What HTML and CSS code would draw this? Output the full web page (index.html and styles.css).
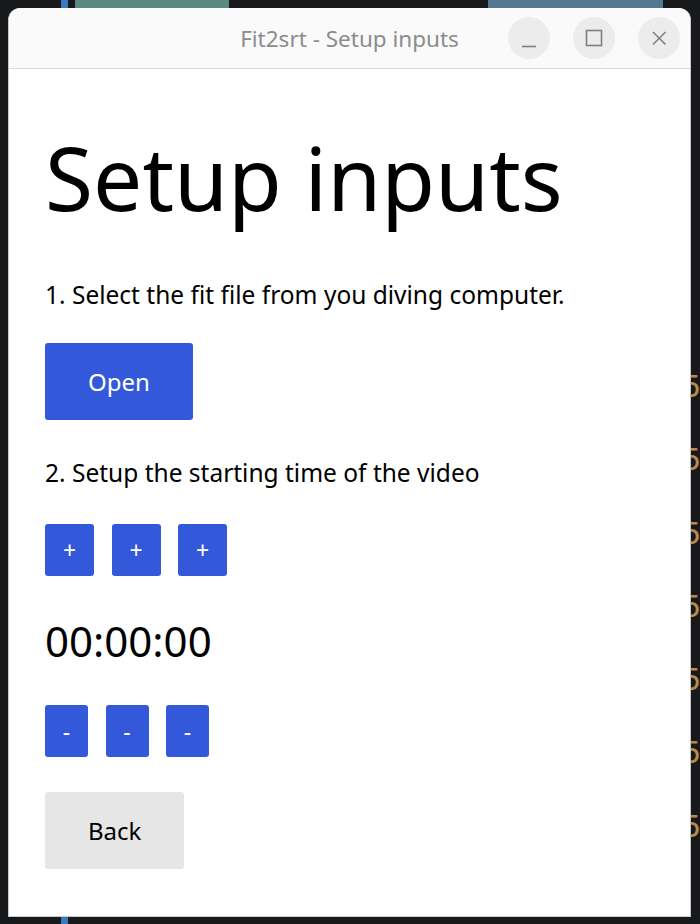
FILE: index.html
```html
<!DOCTYPE html>
<html lang="en">
<head>
<meta charset="utf-8">
<title>Fit2srt - Setup inputs</title>
<link rel="stylesheet" href="styles.css">
</head>
<body>
<div class="desktop">
  <div class="bg-bar"></div>
  <div class="bg-strip bg-teal"></div>
  <div class="bg-strip bg-slate"></div>
  <div class="bg-digits">5<br>5<br>5<br>5<br>5<br>5<br>5</div>

  <div class="window">
    <header class="titlebar">
      <span class="title">Fit2srt - Setup inputs</span>
      <div class="controls">
        <button class="ctl" aria-label="Minimize">
          <svg width="42" height="42" viewBox="0 0 42 42"><line x1="14" y1="29.5" x2="28" y2="29.5"/></svg>
        </button>
        <button class="ctl" aria-label="Maximize">
          <svg width="42" height="42" viewBox="0 0 42 42"><rect x="13.5" y="13.5" width="15" height="15"/></svg>
        </button>
        <button class="ctl" aria-label="Close">
          <svg width="42" height="42" viewBox="0 0 42 42"><line x1="15" y1="15" x2="27.5" y2="27.5"/><line x1="27.5" y1="15" x2="15" y2="27.5"/></svg>
        </button>
      </div>
    </header>

    <main class="content">
      <h1 class="heading">Setup inputs</h1>
      <p class="step step-first">1. Select the fit file from you diving computer.</p>
      <button class="btn btn-primary btn-large btn-open">Open</button>
      <p class="step step-second">2. Setup the starting time of the video</p>
      <div class="adjust-row row-plus">
        <button class="btn btn-primary btn-small btn-plus">+</button>
        <button class="btn btn-primary btn-small btn-plus">+</button>
        <button class="btn btn-primary btn-small btn-plus">+</button>
      </div>
      <div class="timer">00:00:00</div>
      <div class="adjust-row row-minus">
        <button class="btn btn-primary btn-small btn-minus">-</button>
        <button class="btn btn-primary btn-small btn-minus">-</button>
        <button class="btn btn-primary btn-small btn-minus">-</button>
      </div>
      <button class="btn btn-secondary btn-large btn-back">Back</button>
    </main>
  </div>
</div>
</body>
</html>
```

FILE: styles.css
```css
* {
  box-sizing: border-box;
}

html, body {
  margin: 0;
  padding: 0;
}

body {
  width: 700px;
  height: 924px;
  overflow: hidden;
  background: #18191b;
  font-family: "Noto Sans", "Open Sans", sans-serif;
}

.desktop {
  position: relative;
  width: 700px;
  height: 924px;
  overflow: hidden;
}

/* background desktop items peeking around the window */
.bg-bar {
  position: absolute;
  left: 61px;
  top: 0;
  width: 7px;
  height: 924px;
  background: #3a78c2;
}

.bg-strip {
  position: absolute;
  top: 0;
  height: 10px;
}

.bg-teal {
  left: 75px;
  width: 154px;
  background: #5a8a7f;
}

.bg-slate {
  left: 488px;
  width: 175px;
  background: #52798f;
}

.bg-digits {
  position: absolute;
  left: 683px;
  top: 350px;
  font-family: "DejaVu Sans Mono", monospace;
  font-size: 30px;
  line-height: 73.3px;
  color: #b88a4e;
}

/* window */
.window {
  position: absolute;
  left: 8px;
  top: 8px;
  width: 683px;
  height: 909px;
  display: flex;
  flex-direction: column;
  background: #ffffff;
  border: 1px solid #c9c9c9;
  border-top: none;
  border-radius: 12px 12px 0 0;
}

.titlebar {
  height: 61px;
  flex: none;
  display: grid;
  grid-template-columns: 1fr auto 1fr;
  align-items: center;
  background: #fafafa;
  border-bottom: 1px solid #dadada;
  border-radius: 12px 12px 0 0;
}

.title {
  grid-column: 2;
  font-size: 22.5px;
  color: #8c8c8c;
  padding-top: 1px;
}

.controls {
  grid-column: 3;
  justify-self: end;
  display: flex;
  gap: 23px;
  padding-right: 10px;
}

.ctl {
  width: 42px;
  height: 42px;
  padding: 0;
  border: none;
  border-radius: 50%;
  background: #ececec;
  display: flex;
  align-items: center;
  justify-content: center;
}

.ctl svg {
  display: block;
  fill: none;
  stroke: #7f7f7f;
  stroke-width: 1.6;
}

/* content */
.content {
  flex: 1;
  display: flex;
  flex-direction: column;
  align-items: flex-start;
  padding: 0 36px;
  color: #000000;
}

.heading {
  margin: 56px 0 0 0;
  font-size: 87.5px;
  font-weight: 400;
  line-height: 105px;
}

.step {
  margin: 0;
  font-size: 24.5px;
  line-height: 30px;
}

.step-first {
  margin-top: 49.5px;
}

.step-second {
  margin-top: 38.5px;
}

.btn {
  border: none;
  border-radius: 3px;
  font-family: inherit;
  padding: 0;
  display: flex;
  align-items: center;
  justify-content: center;
}

.btn-primary {
  background: #3358da;
  color: #ffffff;
}

.btn-secondary {
  background: #e6e6e6;
  color: #000000;
}

.btn-large {
  height: 77px;
  padding: 0 43px;
  font-size: 24px;
}

.btn-open {
  margin-top: 33px;
}

.btn-back {
  margin-top: 35px;
}

.adjust-row {
  display: flex;
}

.row-plus {
  margin-top: 35.5px;
  gap: 17.5px;
}

.row-minus {
  margin-top: 39px;
  gap: 17.5px;
}

.btn-small {
  height: 52px;
  font-size: 23px;
}

.btn-plus {
  width: 49px;
}

.btn-minus {
  width: 43px;
}

.timer {
  margin-top: 40.5px;
  font-size: 42px;
  line-height: 1.2;
}
```
